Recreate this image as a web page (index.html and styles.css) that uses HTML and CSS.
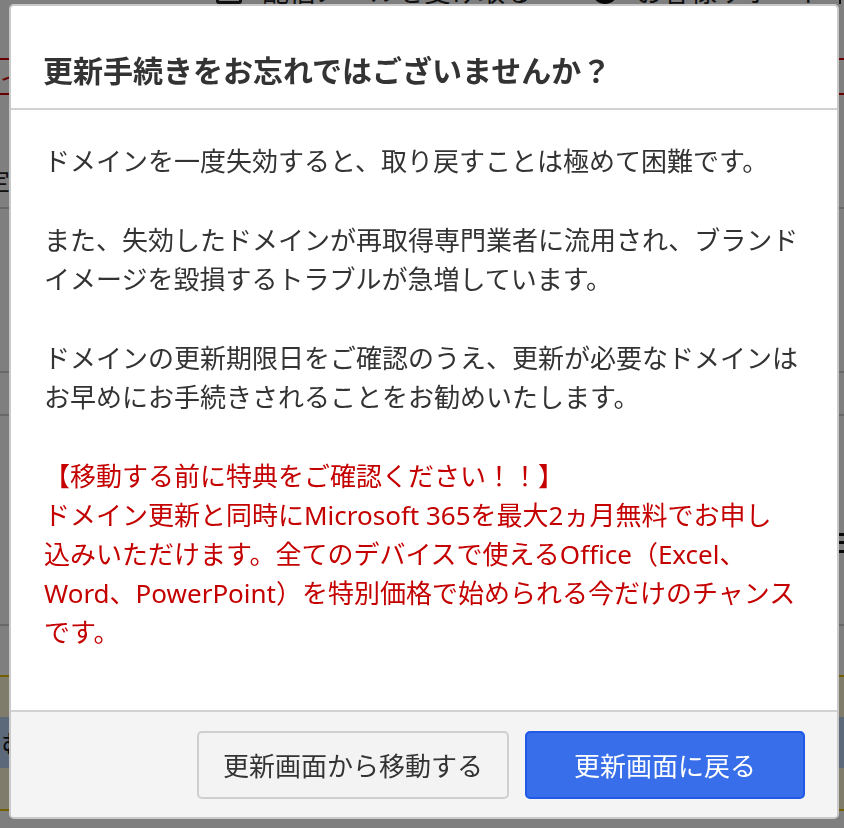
FILE: index.html
```html
<!DOCTYPE html>
<html lang="ja">
<head>
<meta charset="utf-8">
<title>更新手続きをお忘れではございませんか？</title>
<link rel="stylesheet" href="styles.css">
</head>
<body>
<div class="page">
  <div class="page-head">
    <span class="chk"></span><span class="head-text">配信メールを受け取る</span>
    <span class="dot"></span><span class="head-text">お客様サポート</span><span class="sep"></span>
  </div>
  <div class="alert-box">イ</div>
  <div class="row row-a"><span class="row-label">定</span></div>
  <div class="row row-b"></div>
  <div class="row row-c"></div>
  <div class="row row-d"><span class="menu-lines"></span></div>
  <div class="row row-e"></div>
  <div class="notice">
    <div class="notice-box">む</div>
  </div>
</div>

<div class="backdrop"></div>

<div class="modal" role="dialog" aria-labelledby="modal-title">
  <div class="modal-header">
    <h2 class="modal-title" id="modal-title">更新手続きをお忘れではございませんか？</h2>
  </div>
  <div class="modal-body">
    <p class="para">ドメインを一度失効すると、取り戻すことは極めて困難です。</p>
    <p class="para">また、失効したドメインが再取得専門業者に流用され、ブランド<br>イメージを毀損するトラブルが急増しています。</p>
    <p class="para">ドメインの更新期限日をご確認のうえ、更新が必要なドメインは<br>お早めにお手続きされることをお勧めいたします。</p>
    <p class="para para-red">【移動する前に特典をご確認ください！！】<br>ドメイン更新と同時にMicrosoft 365を最大2ヵ月無料でお申し<br>込みいただけます。全てのデバイスで使えるOffice（Excel、<br>Word、PowerPoint）を特別価格で始められる今だけのチャンス<br>です。</p>
  </div>
  <div class="modal-footer">
    <button class="btn btn-secondary" type="button">更新画面から移動する</button>
    <button class="btn btn-primary" type="button">更新画面に戻る</button>
  </div>
</div>
</body>
</html>
```

FILE: styles.css
```css
* { box-sizing: border-box; }

html, body {
  margin: 0;
  padding: 0;
  height: 100%;
  overflow: hidden;
}

body {
  background: #ffffff;
  font-family: "Noto Sans CJK JP", "Noto Sans", sans-serif;
  color: #333333;
}

/* ---------- background page (dimmed by backdrop) ---------- */
.page {
  width: 100%;
}

.page-head {
  display: flex;
  align-items: center;
  height: 30px;
  margin-top: -24px;
  padding-left: 216px;
  font-size: 27px;
  line-height: 30px;
  color: #222;
  white-space: nowrap;
}

.chk {
  width: 26px;
  height: 26px;
  border: 3px solid #222;
  border-radius: 3px;
  margin-right: 20px;
}

.dot {
  width: 26px;
  height: 26px;
  border-radius: 50%;
  background: #111;
  margin-left: 60px;
  margin-right: 18px;
}

.sep {
  width: 2px;
  height: 26px;
  background: #222;
  margin-left: 14px;
}

.alert-box {
  margin-top: 52px;
  height: 37px;
  border-top: 2px solid #cc0000;
  border-bottom: 2px solid #cc0000;
  color: #cc0000;
  font-size: 26px;
  line-height: 33px;
  padding-left: 0;
}

.row {
  display: flex;
  align-items: flex-end;
  justify-content: space-between;
  border-bottom: 2px solid #d0d0d0;
}

.row-a { height: 114px; padding-bottom: 12px; }
.row-b { height: 164px; }
.row-c { height: 43px; }
.row-d { height: 210px; justify-content: flex-end; padding-bottom: 71px; }
.row-e { height: 49px; border-bottom: 0; }

.row-label {
  font-size: 24px;
  line-height: 30px;
  color: #222;
  margin-left: -14px;
}

.menu-lines {
  width: 14px;
  height: 20px;
  border-top: 3px solid #111;
  border-bottom: 3px solid #111;
  margin-right: -8px;
  position: relative;
}

.menu-lines::after {
  content: "";
  position: absolute;
  left: 0;
  right: 0;
  top: 5px;
  height: 3px;
  background: #111;
}

.notice {
  height: 136px;
  background: #fff8d6;
  border-top: 2px solid #e6c000;
  border-bottom: 2px solid #e6c000;
  padding-top: 40px;
}

.notice-box {
  width: 100%;
  height: 51px;
  background: #b6d2f6;
  font-size: 26px;
  line-height: 51px;
  color: #111;
  padding-left: 1px;
}

.backdrop {
  position: fixed;
  inset: 0;
  background: rgba(0, 0, 0, 0.5);
}

/* ---------- modal ---------- */
.modal {
  position: fixed;
  left: 9px;
  top: 4px;
  width: 830px;
  height: 815px;
  display: flex;
  flex-direction: column;
  background: #ffffff;
  border: 2px solid #c9c9c9;
  border-radius: 5px;
  overflow: hidden;
}

.modal-header {
  padding: 41px 32px 16px;
  border-bottom: 2px solid #d2d2d2;
}

.modal-title {
  margin: 0;
  font-size: 30px;
  line-height: 45px;
  font-weight: 700;
  color: #333333;
  white-space: nowrap;
}

.modal-body {
  flex: 1;
  padding: 32px 33px 0;
  font-family: "Noto Sans", "Noto Sans CJK JP", sans-serif;
  font-size: 26px;
  line-height: 39px;
  color: #333333;
}

.para {
  margin: 0 0 40px;
  white-space: nowrap;
}

.para-red {
  color: #c40000;
}

.modal-footer {
  display: flex;
  justify-content: flex-end;
  gap: 16px;
  padding: 19px 32px 18px;
  background: #f4f4f4;
  border-top: 2px solid #d2d2d2;
}

.btn {
  min-width: 280px;
  height: 68px;
  padding: 12px 24px;
  border-radius: 5px;
  font-family: inherit;
  font-size: 26px;
  line-height: 40px;
  white-space: nowrap;
}

.btn-secondary {
  background: #f3f3f3;
  border: 2px solid #cfcfcf;
  color: #333333;
}

.btn-primary {
  background: #386ee9;
  border: 2px solid #1f59e6;
  color: #ffffff;
}
```
